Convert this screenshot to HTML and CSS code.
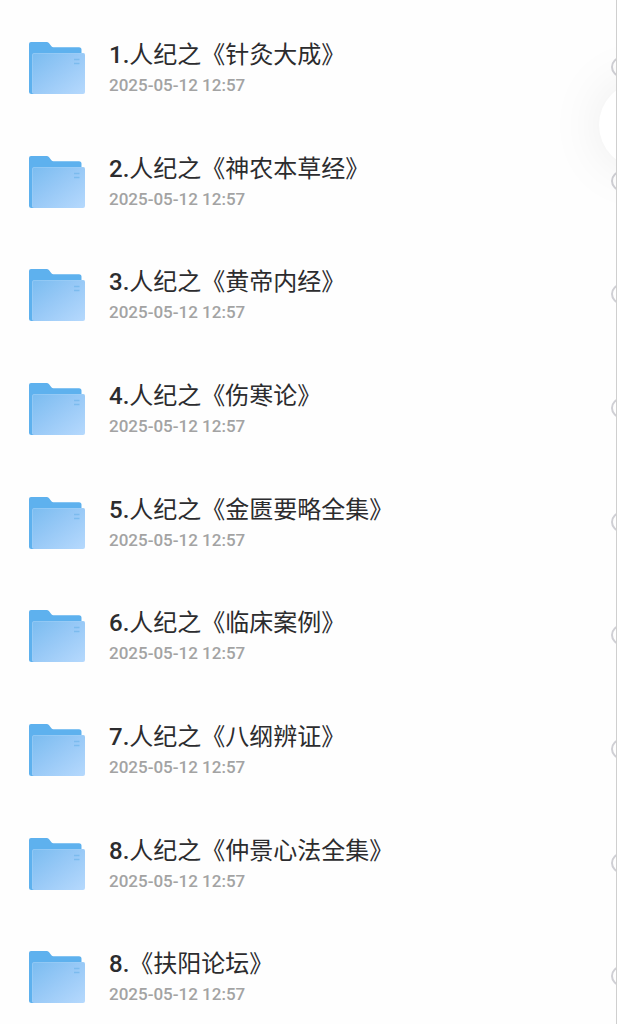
FILE: index.html
```
<!DOCTYPE html>
<html lang="zh-CN">
<head>
  <meta charset="UTF-8">
  <meta name="viewport" content="width=device-width, initial-scale=1.0">
  <title>人纪</title>
  <link rel="stylesheet" href="styles.css">
</head>
<body>
  <svg class="defs" width="0" height="0" aria-hidden="true">
    <defs>
      <linearGradient id="front" x1="0" y1="0" x2="1" y2="1">
        <stop offset="0" stop-color="#7abcf0"/>
        <stop offset="0.45" stop-color="#96c8f6"/>
        <stop offset="1" stop-color="#b6d9fd"/>
      </linearGradient>
    </defs>
    <symbol id="folder" viewBox="0 0 58 54">
      <path fill="#5eb1ee" d="M3 1h15.500q1.600 0 2.600 1.300l2.300 3q.8.900 2 .900h25.600q2.500 0 2.500 2.500V30L8 53H3.500q-2.500 0-2.500-2.500V3q0-2 2-2z"/>
      <rect x="4" y="12" width="53" height="41" rx="2" fill="url(#front)"/>
      <path d="M4.500 52V14q0-1.500 1.500-1.500h49.500q1 0 1 1.500" fill="none" stroke="#a2d1f8" stroke-width="1" opacity=".5"/>
      <path d="M46 18.500h5.500M46 22.500h5.500" stroke="#7cbbee" stroke-width="1.300"/>
    </symbol>
  </svg>

  <main class="page">
    <ul class="file-list" id="file-list"></ul>
    <button class="float-btn" type="button"></button>
  </main>

  <script>
    const files = [
      ["1.", "人纪之《针灸大成》"],
      ["2.", "人纪之《神农本草经》"],
      ["3.", "人纪之《黄帝内经》"],
      ["4.", "人纪之《伤寒论》"],
      ["5.", "人纪之《金匮要略全集》"],
      ["6.", "人纪之《临床案例》"],
      ["7.", "人纪之《八纲辨证》"],
      ["8.", "人纪之《仲景心法全集》"],
      ["8.", "《扶阳论坛》"]
    ];
    document.getElementById('file-list').innerHTML = files.map(([num, name], i) => `
      <li class="file">
        <svg class="folder" aria-hidden="true"><use href="#folder"/></svg>
        <div class="info">
          <label class="name" for="file-${i}"><span class="num">${num}</span>${name}</label>
          <time class="date" datetime="2025-05-12T12:57">2025-05-12 12:57</time>
        </div>
        <input class="check" type="checkbox" id="file-${i}">
      </li>
    `).join('');
  </script>
</body>
</html>
```
FILE: styles.css
```
:root {
  --bg: #fefefe;
  --text: #2c2c2e;
  --muted: #a3a3a3;
  --line: #cfcfcf;
}
* {
  box-sizing: border-box;
}
body {
  margin: 0;
  background: var(--bg);
  color: var(--text);
  font-family: Roboto, "Noto Sans CJK SC", sans-serif;
}
.defs {
  position: absolute;
}
.page {
  position: relative;
  overflow: hidden;
  border-right: 1px solid var(--line);
}
.file-list {
  display: grid;
  grid-auto-rows: 1fr;
  min-height: 100vh;
  margin: 0;
  padding: 0 0 1px;
  list-style: none;
}
.file {
  display: flex;
  align-items: flex-start;
  padding: 41px 0 8px 28px;
}
.folder {
  flex: none;
  width: 58px;
  height: 54px;
}
.info {
  flex: 1;
  display: flex;
  flex-direction: column;
  min-width: 0;
  margin-left: 23px;
}
.name {
  font-size: 24px;
  line-height: 28px;
}
.num {
  font-weight: 500;
}
.date {
  color: var(--muted);
  font-size: 17px;
  font-weight: 500;
  line-height: 32px;
}
/* round checkbox, half hidden behind the right edge */
.check {
  appearance: none;
  flex: none;
  width: 20px;
  height: 20px;
  margin: 16px -15px 0 0;
  border: 2px solid #cfcfd4;
  border-radius: 50%;
}
.check:checked {
  background: #5eb1ee;
}
.float-btn {
  position: absolute;
  top: 82px;
  right: -69px;
  width: 86px;
  height: 86px;
  padding: 0;
  border: none;
  border-radius: 50%;
  background: #fff;
  box-shadow: 0 0 56px rgba(0, 0, 0, 0.08);
}
```
